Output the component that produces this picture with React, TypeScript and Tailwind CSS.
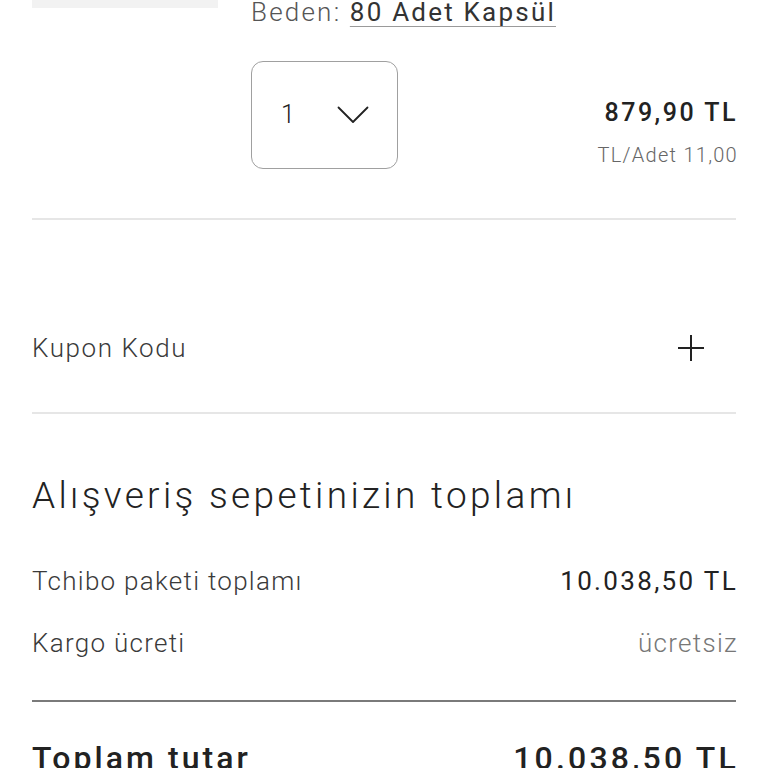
const font = { fontFamily: "Roboto, 'Liberation Sans', sans-serif" };

const Divider = ({ dark }: { dark?: boolean }) => (
  <div className={dark ? "h-[2px] bg-[#7a7a7a]" : "h-[2px] bg-[#e6e6e6]"} />
);

export default function App() {
  return (
    <div className="bg-white min-h-screen px-8 text-[#333] font-light tracking-[0.08em]" style={font}>
      {/* Product line (cut off at top) */}
      <div className="flex gap-[33px]">
        <div className="w-[186px] h-[8px] bg-[#f2f2f2] shrink-0" />
        <div className="flex-1">
          <div className="text-[26px] leading-[30px] -mt-[3px] text-[#555] tracking-[0.085em]">
            Beden:{" "}
            <span className="text-[#333] font-normal underline decoration-[#9a9a9a] decoration-1 underline-offset-[5px]">
              80 Adet Kapsül
            </span>
          </div>
          <div className="flex items-start justify-between mt-[34px]">
            <button className="w-[147px] h-[108px] border-[1.5px] border-[#a0a0a0] rounded-[12px] flex items-center pl-[29px] gap-[41px] text-[25px] text-[#222]">
              <span>1</span>
              <svg width="32" height="18" viewBox="0 0 32 18" fill="none" stroke="#222" strokeWidth="1.8" strokeLinecap="round" strokeLinejoin="round">
                <polyline points="1.5,1.5 16,16 30.5,1.5" />
              </svg>
            </button>
            <div className="text-right mt-[38px] -mr-[2px]">
              <div className="text-[25px] leading-[28px] font-medium text-[#222] tracking-[0.1em]">879,90 TL</div>
              <div className="text-[20px] leading-[24px] mt-[16px] text-[#666]">TL/Adet 11,00</div>
            </div>
          </div>
        </div>
      </div>

      <div className="mt-[49px]">
        <Divider />
      </div>

      {/* Coupon */}
      <div className="h-[192px] flex items-center justify-between pt-[64px]">
        <span className="text-[26px] text-[#3a3a3a] tracking-[0.06em]">Kupon Kodu</span>
        <svg width="26" height="26" viewBox="0 0 26 26" fill="none" stroke="#222" strokeWidth="2" className="mr-[32px]">
          <line x1="13" y1="0" x2="13" y2="26" />
          <line x1="0" y1="13" x2="26" y2="13" />
        </svg>
      </div>
      <Divider />

      {/* Summary */}
      <h2 className="text-[37px] leading-[44px] mt-[60px] text-[#222] tracking-[0.09em]">Alışveriş sepetinizin toplamı</h2>
      <div className="mt-[48px] flex flex-col gap-[32px] text-[26px] leading-[30px]">
        <div className="flex justify-between">
          <span className="text-[#3a3a3a]">Tchibo paketi toplamı</span>
          <span className="font-normal text-[#222] tracking-[0.09em] -mr-[2px]">10.038,50 TL</span>
        </div>
        <div className="flex justify-between">
          <span className="text-[#3a3a3a]">Kargo ücreti</span>
          <span className="text-[#777] -mr-[2px]">ücretsiz</span>
        </div>
      </div>
      <div className="mt-[42px]">
        <Divider dark />
      </div>
      <div className="mt-[36px] flex justify-between text-[32px] leading-[40px] font-medium text-[#222]">
        <span className="tracking-[0.095em]">Toplam tutar</span>
        <span className="tracking-[0.1em] -mr-[3px]">10.038,50 TL</span>
      </div>
    </div>
  );
}
